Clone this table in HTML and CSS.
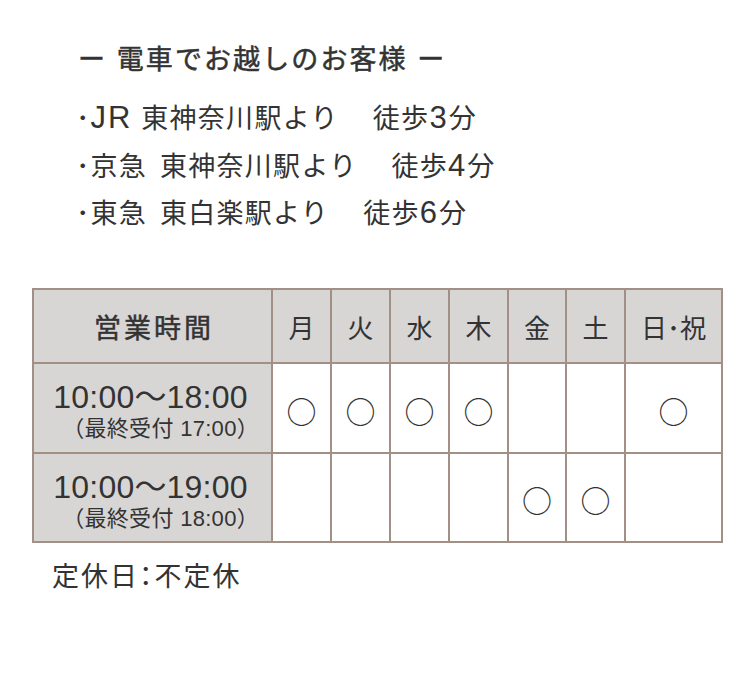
FILE: index.html
```html
<!DOCTYPE html>
<html lang="ja">
<head>
<meta charset="utf-8">
<title>アクセス・営業時間</title>
<link rel="stylesheet" href="styles.css">
</head>
<body>
<div class="page">
  <section class="access">
    <h2 class="access-title">ー 電車でお越しのお客様 ー</h2>
    <ul class="access-list">
      <li><span class="dot">･</span><span class="en">JR</span> 東神奈川駅より<span class="gap">　</span>徒歩<span class="en">3</span>分</li>
      <li class="wide"><span class="dot">･</span>京急 東神奈川駅より<span class="gap">　</span>徒歩<span class="en">4</span>分</li>
      <li class="wide"><span class="dot">･</span>東急 東白楽駅より<span class="gap">　</span>徒歩<span class="en">6</span>分</li>
    </ul>
  </section>

  <div class="hours">
    <div class="cell head label">営業時間</div>
    <div class="cell head">月</div>
    <div class="cell head">火</div>
    <div class="cell head">水</div>
    <div class="cell head">木</div>
    <div class="cell head">金</div>
    <div class="cell head">土</div>
    <div class="cell head">日<span class="hdot">･</span>祝</div>

    <div class="cell time"><span class="time-main">10:00〜18:00</span><span class="time-sub">（最終受付 17:00）</span></div>
    <div class="cell"><span class="mark">○</span></div>
    <div class="cell"><span class="mark">○</span></div>
    <div class="cell"><span class="mark">○</span></div>
    <div class="cell"><span class="mark">○</span></div>
    <div class="cell"></div>
    <div class="cell"></div>
    <div class="cell"><span class="mark">○</span></div>

    <div class="cell time"><span class="time-main">10:00〜19:00</span><span class="time-sub">（最終受付 18:00）</span></div>
    <div class="cell"></div>
    <div class="cell"></div>
    <div class="cell"></div>
    <div class="cell"></div>
    <div class="cell"><span class="mark">○</span></div>
    <div class="cell"><span class="mark">○</span></div>
    <div class="cell"></div>
  </div>

  <p class="holiday">定休日<span class="colon">：</span>不定休</p>
</div>
</body>
</html>
```

FILE: styles.css
```css
html, body {
  margin: 0;
  padding: 0;
  background: #ffffff;
}

body {
  font-family: "Liberation Sans", "Noto Sans CJK JP", sans-serif;
  color: #333333;
}

.page {
  padding: 40px 0 0 32px;
}

.access {
  padding-left: 44px;
}

.access-title {
  margin: 0;
  font-size: 27px;
  font-weight: 400;
  -webkit-text-stroke: 0.5px #333333;
  line-height: 40px;
  letter-spacing: 2.1px;
  padding-left: 2px;
}

.access-list {
  list-style: none;
  margin: 16px 0 0;
  padding: 0;
}

.access-list li {
  font-size: 27px;
  line-height: 47.5px;
  height: 47.5px;
  letter-spacing: 1.3px;
}

.access-list li.wide {
  word-spacing: 4px;
}

.en {
  font-size: 31px;
  line-height: 1;
  letter-spacing: 2px;
}

.dot {
  letter-spacing: 0;
  margin-right: 1px;
}

.gap {
  letter-spacing: 7px;
}

.hours {
  margin-top: 49px;
  width: 691px;
  display: grid;
  grid-template-columns: 237px 57px 57px 57px 57px 56px 57px 95px;
  grid-template-rows: 72px 88px 87px;
  gap: 2px;
  padding: 2px;
  box-sizing: border-box;
  background: #a48f86;
}

.cell {
  background: #ffffff;
  display: flex;
  align-items: center;
  justify-content: center;
}

.head {
  background: #d8d6d4;
  font-size: 26px;
  padding-top: 2px;
  box-sizing: border-box;
}

.head.label {
  font-size: 27px;
  letter-spacing: 3px;
  padding-left: 3px;
  -webkit-text-stroke: 0.5px #333333;
}

.time {
  background: #d8d6d4;
  flex-direction: column;
  align-items: center;
  padding-top: 9px;
  box-sizing: border-box;
}

.time-main {
  font-size: 32px;
  line-height: 34px;
  letter-spacing: 0.2px;
  padding-right: 4px;
}

.time-sub {
  font-size: 22px;
  line-height: 30px;
  align-self: flex-end;
  margin-right: 12px;
  letter-spacing: 0.3px;
}

.mark {
  font-size: 30px;
  line-height: 1;
  padding-top: 4px;
  font-family: "Noto Sans CJK JP", sans-serif;
}

.holiday {
  margin: 16px 0 0 20px;
  font-size: 27px;
  line-height: 36px;
  letter-spacing: 2px;
}

.colon {
  font-feature-settings: "halt";
}
```
